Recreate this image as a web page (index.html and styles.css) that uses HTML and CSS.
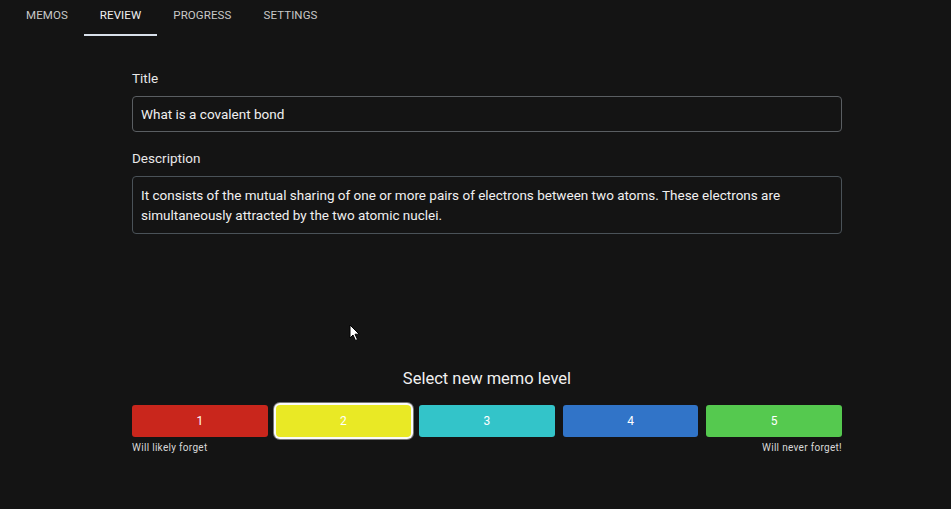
FILE: index.html
```html
<!DOCTYPE html>
<html>
<head>
<meta charset="utf-8">
<link rel="stylesheet" href="styles.css">
</head>
<body>
<nav class="tabs">
  <div class="tab">MEMOS</div>
  <div class="tab active">REVIEW</div>
  <div class="tab">PROGRESS</div>
  <div class="tab">SETTINGS</div>
</nav>
<main class="content">
  <div class="field">
    <label class="label">Title</label>
    <div class="box single">What is a covalent bond</div>
  </div>
  <div class="field">
    <label class="label">Description</label>
    <div class="box multi">It consists of the mutual sharing of one or more pairs of electrons between two atoms. These electrons are simultaneously attracted by the two atomic nuclei.</div>
  </div>
  <section class="levels">
    <h2 class="levels-title">Select new memo level</h2>
    <div class="buttons">
      <button class="lvl l1">1</button>
      <button class="lvl l2">2</button>
      <button class="lvl l3">3</button>
      <button class="lvl l4">4</button>
      <button class="lvl l5">5</button>
    </div>
    <div class="captions">
      <span>Will likely forget</span>
      <span>Will never forget!</span>
    </div>
  </section>
</main>
<svg class="cursor" width="12" height="18" viewBox="0 0 12 18"><path d="M1 1 L1 14 L4 11 L6.5 16.5 L8.5 15.5 L6 10.2 L10.2 10.2 Z" fill="#fff" stroke="#000" stroke-width="1"/></svg>
</body>
</html>
```
FILE: styles.css
```css
html, body {
  margin: 0;
  padding: 0;
  background: #141414;
  color: #e6e6e6;
  font-family: Roboto, "Noto Sans", sans-serif;
  height: 509px;
  overflow: hidden;
}
.tabs {
  display: flex;
  height: 36px;
  padding-left: 10px;
}
.tab {
  font-size: 11.5px;
  letter-spacing: 0.1px;
  color: #c8c8c8;
  padding: 0 16px;
  line-height: 30px;
  height: 36px;
  box-sizing: border-box;
}
.tab.active {
  color: #f0f0f0;
  border-bottom: 2px solid #d8e0ea;
}
.content {
  width: 710px;
  margin-left: 132px;
  padding-top: 34px;
}
.field { margin-bottom: 18px; }
.label {
  display: block;
  font-size: 13.5px;
  color: #e8e8e8;
  line-height: 16px;
  margin-bottom: 10px;
}
.box {
  border: 1px solid #5a5e62;
  border-radius: 4px;
  font-size: 13.5px;
  color: #f0f0f0;
  padding: 0 8px;
  box-sizing: border-box;
}
.box.single {
  height: 36px;
  line-height: 34px;
}
.box.multi {
  border-color: #4a5258;
  padding: 8px 8px 8px;
  line-height: 20px;
  height: 58px;
}
.levels {
  margin-top: 135px;
}
.levels-title {
  margin: 0 0 16px;
  text-align: center;
  font-size: 16.5px;
  font-weight: 400;
  color: #f0f0f0;
  line-height: 20px;
}
.buttons {
  display: flex;
  gap: 8px;
}
.lvl {
  flex: 1;
  height: 32px;
  border: none;
  border-radius: 3px;
  color: #fff;
  font-family: Roboto, sans-serif;
  font-size: 12px;
  padding: 0;
}
.l1 { background: #c9261c; }
.l2 {
  background: #e9e925;
  box-shadow: 0 0 0 2px #fafafa, 0 0 0 3px #777;
  border-radius: 4px;
}
.l3 { background: #33c4c9; }
.l4 { background: #3174c8; }
.l5 { background: #55c94f; }
.captions {
  display: flex;
  justify-content: space-between;
  font-size: 10px;
  color: #d8d8d8;
  margin-top: 5px;
  letter-spacing: 0.3px;
}
.cursor {
  position: absolute;
  left: 349px;
  top: 324px;
}
```
